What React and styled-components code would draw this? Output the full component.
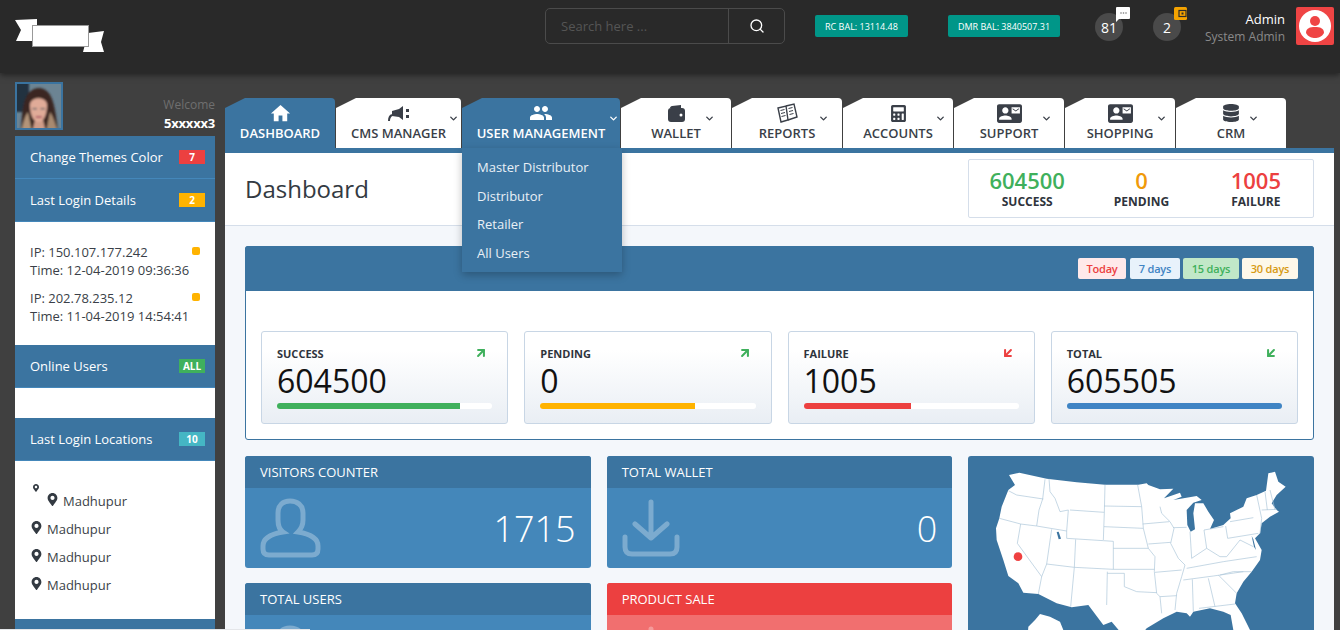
import React from 'react';
import styled, { createGlobalStyle } from 'styled-components';
import { Search, ArrowUpRight, ArrowDownLeft, ChevronDown } from 'lucide-react';
import { FaCalculator, FaDatabase, FaMapMarkerAlt } from 'react-icons/fa';
import { MdHome, MdPeople, MdContactMail } from 'react-icons/md';

const GlobalStyle = createGlobalStyle`
  html, body { margin: 0; padding: 0; height: 100%; overflow: hidden; }
  body { font-family: "Open Sans", "Liberation Sans", sans-serif; background: #404040; }
  * { box-sizing: border-box; }
`;

const Page = styled.div`
  height: 630px;
  overflow: hidden;
  display: flex;
  flex-direction: column;
`;

/* header */
const Header = styled.header`
  height: 73px;
  flex: none;
  background: #292929;
  box-shadow: 0 2px 6px rgba(0, 0, 0, 0.5);
  display: flex;
  align-items: flex-start;
  padding-left: 15px;
  position: relative;
  z-index: 3;
`;

const LogoWrap = styled.div`
  width: 90px;
  height: 34px;
  margin-top: 18px;
  svg { display: block; }
`;

const SearchBox = styled.div`
  width: 240px;
  height: 36px;
  margin: 8px 0 0 440px;
  border: 1px solid #4b4b4b;
  border-radius: 5px;
  display: flex;
  align-items: stretch;
`;

const SearchInput = styled.input`
  width: 182px;
  background: transparent;
  border: 0;
  outline: 0;
  padding: 0 15px;
  color: #fff;
  font: 400 13px "Open Sans", sans-serif;
  &::placeholder { color: #555; opacity: 1; }
`;

const SearchBtn = styled.div`
  flex: 1;
  border-left: 1px solid #4b4b4b;
  color: #fff;
  display: flex;
  align-items: center;
  justify-content: center;
`;

const Balance = styled.div`
  height: 22px;
  margin-top: 15px;
  margin-left: ${p => p.$ml}px;
  width: ${p => p.$w}px;
  background: #009688;
  border-radius: 2px;
  color: #fff;
  font-size: 9px;
  display: flex;
  align-items: center;
  justify-content: center;
  white-space: nowrap;
`;

const Notify = styled.div`
  position: relative;
  width: 28px;
  height: 28px;
  margin-top: 13px;
  margin-left: ${p => p.$ml}px;
  border-radius: 50%;
  background: #4a4a4a;
  color: #fff;
  font-size: 14px;
  display: flex;
  align-items: center;
  justify-content: center;
`;

const NotifyIcon = styled.div`
  position: absolute;
  top: -6px;
  left: 21px;
  line-height: 0;
`;

const UserText = styled.div`
  width: 104px;
  margin-top: 10px;
  text-align: right;
`;

const UserName = styled.div`
  color: #fff;
  font-size: 13px;
  line-height: 18px;
`;

const UserRole = styled.div`
  color: #8a8a8a;
  font-size: 12px;
  line-height: 18px;
`;

const UserTile = styled.div`
  width: 38px;
  height: 38px;
  margin: 7px 0 0 11px;
  background: #ef4444;
  border-radius: 2px;
  display: flex;
  align-items: center;
  justify-content: center;
`;

/* body */
const Body = styled.div`
  flex: 1;
  min-height: 0;
  display: flex;
  gap: 10px;
  padding: 0 6px 0 15px;
`;

const Sidebar = styled.aside`
  width: 200px;
  flex: none;
  padding-top: 9px;
`;

const Profile = styled.div`
  display: flex;
  justify-content: space-between;
  align-items: flex-end;
  height: 48px;
  margin-bottom: 6px;
`;

const Avatar = styled.div`
  width: 48px;
  height: 48px;
  border: 2px solid #3b74a0;
  overflow: hidden;
  svg { display: block; }
`;

const Welcome = styled.div`
  text-align: right;
  margin-bottom: -3px;
`;

const WelcomeLabel = styled.div`
  color: #6f6f6f;
  font-size: 12px;
  line-height: 18px;
`;

const WelcomeName = styled.div`
  color: #fff;
  font-size: 13px;
  font-weight: 700;
  letter-spacing: -0.2px;
  line-height: 19px;
`;

const SideItem = styled.div`
  height: 43px;
  padding: 0 10px 0 15px;
  background: #3b74a0;
  border-bottom: 1px solid #4487ba;
  color: #fff;
  font-size: 13px;
  display: flex;
  align-items: center;
  justify-content: space-between;
`;

const Badge = styled.span`
  width: 26px;
  height: 14px;
  background: ${p => p.$bg};
  color: #fff;
  font-size: 10px;
  font-weight: 700;
  line-height: 14px;
  text-align: center;
`;

const SideBlock = styled.div`
  background: #fff;
  height: ${p => p.$h}px;
  padding: ${p => p.$pt || 0}px 15px 0;
  color: #3a3f48;
  font-size: 13px;
  line-height: 18px;
`;

const LoginRow = styled.div`
  position: relative;
  margin-bottom: 10px;
  white-space: nowrap;
`;

const LoginDot = styled.i`
  position: absolute;
  top: 4px;
  right: 0;
  width: 8px;
  height: 8px;
  border-radius: 2px;
  background: #ffb300;
`;

const Place = styled.div`
  display: flex;
  align-items: center;
  gap: 4px;
  height: 28px;
  font-size: 13px;
  padding-left: ${p => p.$pl || 0}px;
  svg { margin-top: -4px; color: #333a42; }
`;

const LoosePin = styled.div`
  height: 3px;
  line-height: 0;
  padding-left: 2px;
  color: #333a42;
`;

/* main column */
const Main = styled.main`
  flex: 1;
  min-width: 0;
  padding-top: 25px;
  display: flex;
  flex-direction: column;
`;

const Tabs = styled.nav`
  height: 50px;
  flex: none;
  display: flex;
  gap: 1px;
  position: relative;
  z-index: 2;
`;

const Tab = styled.div`
  position: relative;
  width: ${p => p.$w}px;
  flex: none;
  background: ${p => (p.$active ? '#3b74a0' : '#fff')};
  color: ${p => (p.$active ? '#fff' : '#3a3f48')};
  border-top-right-radius: 4px;
  display: flex;
  flex-direction: column;
  align-items: center;
  font-size: 13px;
  font-weight: 600;
  white-space: nowrap;
`;

const TabCorner = styled.div`
  position: absolute;
  top: 0;
  left: 0;
  width: 20px;
  height: 10px;
  background: #404040;
  clip-path: polygon(0 0, 100% 0, 0 100%);
`;

const TabIcon = styled.div`
  position: relative;
  height: 20px;
  margin-top: 5px;
  display: flex;
  align-items: center;
  justify-content: center;
`;

const TabLabel = styled.div`
  position: relative;
  line-height: 18px;
  margin-top: 1px;
`;

const TabChevron = styled.div`
  position: absolute;
  top: 15px;
  right: ${p => p.$r}px;
  line-height: 0;
`;

const Dropdown = styled.div`
  position: absolute;
  top: 100%;
  left: 0;
  width: 160px;
  height: 124px;
  padding: 5px 15px 0;
  background: #3b74a0;
  box-shadow: 0 3px 8px rgba(0, 0, 0, 0.25);
  color: #e9f0f6;
  font-size: 13px;
  font-weight: 400;
`;

const DropItem = styled.div`
  height: 28.6px;
  line-height: 28.6px;
`;

const TabBar = styled.div`
  height: 5px;
  flex: none;
  background: #3b74a0;
`;

const Content = styled.div`
  flex: 1;
  min-height: 0;
  overflow: hidden;
  background: #f4f7fb;
`;

const TitleBar = styled.div`
  height: 73px;
  background: #fff;
  border-bottom: 1px solid #d5deea;
  padding: 6px 20px 0 20px;
  display: flex;
  justify-content: space-between;
  align-items: flex-start;
`;

const Title = styled.h1`
  margin: 16px 0 0;
  font-size: 24px;
  font-weight: 400;
  line-height: 28px;
  color: #333a42;
`;

const Summary = styled.div`
  width: 346px;
  height: 59px;
  border: 1px solid #d5deea;
  border-radius: 2px;
  display: grid;
  grid-template-columns: repeat(3, 1fr);
  padding: 7px 0 0 1px;
  text-align: center;
`;

const SummaryValue = styled.div`
  color: ${p => p.$c};
  font-size: 22px;
  font-weight: 600;
  line-height: 26px;
`;

const SummaryLabel = styled.div`
  color: #2f343c;
  font-size: 12px;
  font-weight: 700;
  line-height: 17px;
`;

const Inner = styled.div`
  padding: 20px 20px 0;
`;

const Panel = styled.section`
  border: 1px solid #3b74a0;
  border-radius: 3px;
  background: #fff;
  height: 194px;
`;

const PanelHead = styled.div`
  height: 45px;
  margin: -1px -1px 0;
  padding-right: 16px;
  background: #3b74a0;
  border-radius: 3px 3px 0 0;
  display: flex;
  align-items: center;
  justify-content: flex-end;
  gap: 4px;
`;

const RangeBtn = styled.span`
  height: 21px;
  width: ${p => p.$w}px;
  background: ${p => p.$bg};
  color: ${p => p.$c};
  border-radius: 2px;
  font-size: 11px;
  font-weight: 600;
  letter-spacing: -0.2px;
  line-height: 21px;
  text-align: center;
  margin-left: ${p => p.$ml || 0}px;
`;

const StatRow = styled.div`
  display: grid;
  grid-template-columns: repeat(4, 1fr);
  gap: 16px;
  padding: 40px 15px 0;
`;

const StatCard = styled.div`
  height: 93px;
  padding: 14px 15px 0;
  border: 1px solid #c8d6e5;
  border-radius: 3px;
  background: linear-gradient(#fff 20%, #e9eef4 100%);
`;

const StatTop = styled.div`
  display: flex;
  justify-content: space-between;
  align-items: center;
  height: 14px;
  color: #2f343c;
  font-size: 11px;
  font-weight: 700;
  padding-right: 4px;
`;

const StatValue = styled.div`
  color: #111;
  font-size: 32px;
  line-height: 38px;
  margin-top: 2px;
`;

const Track = styled.div`
  height: 6px;
  margin-top: 3px;
  background: #fff;
  border-radius: 3px;
  overflow: hidden;
`;

const Fill = styled.div`
  height: 100%;
  width: ${p => p.$pct}%;
  background: ${p => p.$c};
`;

const Widgets = styled.div`
  display: grid;
  grid-template-columns: repeat(3, 1fr);
  column-gap: 16px;
  row-gap: 15px;
  margin-top: 16px;
`;

const Widget = styled.div`
  height: 112px;
  border-radius: 3px;
  overflow: hidden;
  background: ${p => (p.$red ? '#f16f6f' : '#4487ba')};
`;

const WidgetHead = styled.div`
  height: 32px;
  padding: 0 15px;
  background: ${p => (p.$red ? '#ec4040' : '#3b74a0')};
  color: #fff;
  font-size: 13px;
  line-height: 32px;
`;

const WidgetBody = styled.div`
  height: 80px;
  padding: 0 15px;
  display: flex;
  align-items: center;
  justify-content: space-between;
  color: #fff;
  font-size: 36px;
  font-weight: 300;
`;

const MapCard = styled.div`
  grid-column: 3;
  grid-row: 1 / span 2;
  height: 239px;
  border-radius: 3px;
  overflow: hidden;
  background: #3b74a0;
  svg { display: block; }
`;

const StatusBubble = styled.div`
  position: fixed;
  left: 0;
  bottom: 0;
  width: 310px;
  height: 1px;
  background: #e4e6e9;
  z-index: 5;
`;

const Logo = () => (
  <svg width="90" height="34" viewBox="0 0 90 34">
    <polygon points="0,2 22,1 22,23 1,23 6,12" fill="#fff" />
    <polygon points="73,15 89,13 86,24 89,34 68,34" fill="#fff" />
    <rect x="17.5" y="7.5" width="56" height="21" fill="#fff" stroke="#999" strokeWidth="1" />
  </svg>
);

const AvatarArt = () => (
  <svg width="44" height="44" viewBox="0 0 44 44">
    <defs>
      <filter id="soft" x="-10%" y="-10%" width="120%" height="120%"><feGaussianBlur stdDeviation="0.8" /></filter>
    </defs>
    <rect width="44" height="44" fill="#6c8493" />
    <g filter="url(#soft)">
      <rect x="-4" y="-4" width="16" height="32" fill="#24333f" />
      <path d="M4 48 C5 22 7 5 22 4 C36 5 38 22 41 48 Z" fill="#3b2822" />
      <path d="M4 48 C7 36 8 32 11 28 L15 48 Z" fill="#b39479" />
      <path d="M41 48 C37 36 36 32 33 28 L29 48 Z" fill="#a88a70" />
      <path d="M15 48 L18 36 L26 36 L29 48 Z" fill="#cf9c88" />
      <path d="M13 21 C13 12 30 12 30 21 C30 32 26 38 21.5 38 C17 38 13 32 13 21 Z" fill="#e0ab98" />
      <rect x="15.5" y="24" width="4.5" height="1.3" fill="#4a5a60" />
      <rect x="23.5" y="24" width="4.5" height="1.3" fill="#4a5a60" />
      <rect x="18.5" y="32" width="6.5" height="2" rx="1" fill="#b05c68" />
    </g>
  </svg>
);

const ChatIcon = () => (
  <svg width="14" height="15" viewBox="0 0 14 15">
    <path d="M0 1 a1 1 0 0 1 1-1 h12 a1 1 0 0 1 1 1 v10 a1 1 0 0 1-1 1 H3 L0 15 Z" fill="#fff" />
    <circle cx="5" cy="6" r="0.8" fill="#777" />
    <circle cx="7.5" cy="6" r="0.8" fill="#777" />
    <circle cx="10" cy="6" r="0.8" fill="#777" />
  </svg>
);

const OrangeWallet = () => (
  <svg width="14" height="13" viewBox="0 0 14 13">
    <rect width="13" height="13" rx="1.5" fill="#f5a300" />
    <rect x="5" y="3.5" width="7" height="6" fill="none" stroke="#2b2b2b" strokeWidth="1.2" />
    <rect x="7.5" y="5.5" width="2" height="2" fill="#2b2b2b" />
  </svg>
);

const UserBadge = () => (
  <svg width="34" height="34" viewBox="0 0 34 34">
    <circle cx="17" cy="17" r="16" fill="#fff" />
    <circle cx="17" cy="12" r="5" fill="#ef4444" />
    <path d="M8 24 C8 19 12 18 17 18 C22 18 26 19 26 24 C24 28 20 29 17 29 C14 29 10 28 8 24 Z" fill="#ef4444" />
  </svg>
);

const CmsIcon = () => (
  <svg width="22" height="15" viewBox="0 0 22 15">
    <path d="M1 15 C1 12 2 10 4 9" fill="none" stroke="currentColor" strokeWidth="2" />
    <path d="M4 5 L11 3 L15 0 L15 14 L11 11 L4 10 Z" fill="currentColor" />
    <rect x="18" y="3" width="3" height="3" fill="currentColor" />
    <rect x="18" y="9" width="3" height="3" fill="currentColor" />
  </svg>
);

const WalletIcon = () => (
  <svg width="17" height="17" viewBox="0 0 17 17">
    <path d="M2 3 C2 2 3 1 4 1 L13 0 V3 Z" fill="currentColor" />
    <rect y="3" width="17" height="14" rx="3" fill="currentColor" />
    <circle cx="13" cy="10" r="1.5" fill="#fff" />
  </svg>
);

const BookIcon = () => (
  <svg width="22" height="20" viewBox="0 0 22 20" fill="none" stroke="currentColor" strokeWidth="1.4">
    <path d="M2 5 L10 3 L12 17 L5 19 Z" />
    <path d="M10 3 L18 1 L21 14 L12 17" />
    <path d="M4.5 7.5 L8.5 6.5 M5 10.5 L9 9.5 M5.5 13.5 L9.5 12.5 M12.5 5.5 L16.5 4.5 M13 8.5 L17 7.5 M13.5 11.5 L17.5 10.5" strokeWidth="1" />
  </svg>
);

const PersonOutline = () => (
  <svg width="62" height="60" viewBox="0 0 62 60" fill="none" stroke="rgba(255,255,255,0.3)" strokeWidth="5">
    <path d="M18 22 V15 C18 7 23 3 30 3 C37 3 43 7 43 15 V22 C43 28 40 32 38 34 C50 36 58 40 58 48 V51 C58 55 56 57 52 57 H9 C5 57 3 55 3 51 V48 C3 40 11 36 23 34 C20 32 18 28 18 22 Z" />
  </svg>
);

const DownloadOutline = () => (
  <svg width="58" height="58" viewBox="0 0 58 58" fill="none" stroke="rgba(255,255,255,0.3)" strokeWidth="5" strokeLinecap="round" strokeLinejoin="round">
    <path d="M29 3 V37 M13 25 L29 39 L45 25" />
    <path d="M3 38 V48 C3 53 6 55 10 55 H48 C52 55 55 53 55 48 V38" />
  </svg>
);

const OUTLINE =
  'M147 75 L178 68 L260 86 L350 97 L435 104 L535 104 L560 100 L565 105 L600 118 L640 116 L612 145 L660 128 L665 140 L640 150 L710 138 L725 150 L700 158 L680 180 L682 225 L692 245 L705 238 L700 190 L705 160 L730 160 L745 185 L762 210 L750 237 L790 225 L812 205 L810 190 L850 170 L860 145 L890 135 L918 122 L925 70 L945 65 L955 95 L977 110 L950 135 L935 160 L950 180 L957 185 L930 200 L905 220 L900 250 L885 265 L905 300 L900 330 L875 365 L850 395 L830 430 L825 460 L845 490 L870 540 L885 590 L880 625 L860 610 L835 570 L820 540 L812 495 L790 485 L750 475 L700 485 L690 500 L680 490 L650 485 L610 505 L560 535 L530 570 L530 610 L500 590 L480 545 L455 515 L430 525 L385 465 L335 472 L290 460 L235 432 L190 428 L175 400 L145 378 L130 330 L110 270 L108 235 L118 205 L125 170 L145 120 L165 105 Z';

const ALASKA = 'M205 530 L225 510 L240 492 L270 500 L300 515 L310 540 L330 600 L280 570 L230 580 L200 600 Z';

const BORDERS = [
  'M145 122 L170 135 L250 147',
  'M255 88 L248 147 L237 180 L230 228',
  'M267 86 L270 125 L285 145 L300 185 L325 180 L320 243 L320 265 L430 272 L460 274 L460 358',
  'M118 205 L182 222 L230 228 L320 243',
  'M330 180 L433 187',
  'M435 104 L433 187 L430 270',
  'M533 105 L545 170 L550 235 L565 295 L585 320 L583 365 L590 430 L600 440 L605 490',
  'M433 168 L545 170',
  'M432 230 L550 235',
  'M347 268 L343 352 L332 470',
  'M275 238 L260 342 L245 380 L235 432',
  'M182 222 L172 280 L245 380',
  'M260 342 L343 352 L460 358 L583 358',
  'M442 365 L440 465',
  'M442 370 L493 370 L493 410 L530 425 L590 428',
  'M460 295 L565 295',
  'M548 222 L628 215',
  'M565 282 L632 277',
  'M600 170 L605 190 L630 215 L642 235 L632 280 L655 325 L675 345 L665 380 L650 430 L645 480',
  'M640 233 L680 232',
  'M585 367 L665 360',
  'M600 440 L650 437',
  'M690 245 L695 325',
  'M732 240 L740 295',
  'M732 240 L790 230',
  'M695 325 L740 295 L780 320',
  'M680 355 L790 335 L890 320',
  'M670 390 L760 378 L850 365',
  'M697 388 L700 485',
  'M745 385 L765 470',
  'M717 475 L825 462',
  'M775 375 L830 430',
  'M780 375 L820 365 L875 365',
  'M797 228 L803 265 L895 250',
  'M810 215 L880 203',
  'M780 320 L800 320 L840 270 L880 290',
  'M890 135 L905 205 L900 250',
  'M915 125 L922 180',
  'M930 120 L945 180',
  'M905 180 L950 178',
];

const UsMap = () => (
  <svg width="346" height="239" viewBox="24 18 1038 717">
    <path d={OUTLINE} fill="#fff" />
    <path d={ALASKA} fill="#fff" />
    <path d={BORDERS.join(' ')} fill="none" stroke="#a9c4d8" strokeWidth="2" />
    <path d="M290 246 L296 245 L303 266 L296 268 Z" fill="#3b74a0" />
    <path d="M875 258 L882 290 L888 300 L880 268 Z" fill="#3b74a0" />
    <circle cx="174" cy="320" r="13" fill="#ef4040" />
  </svg>
);

const tabs = [
  { label: 'DASHBOARD', w: 110, active: true, icon: <MdHome size={23} /> },
  { label: 'CMS MANAGER', w: 125, chev: 2, icon: <CmsIcon /> },
  { label: 'USER MANAGEMENT', w: 158, chev: 1, active: true, open: true, icon: <MdPeople size={24} /> },
  { label: 'WALLET', w: 110, chev: 16, icon: <WalletIcon /> },
  { label: 'REPORTS', w: 110, chev: 13, icon: <BookIcon /> },
  { label: 'ACCOUNTS', w: 110, chev: 7, icon: <FaCalculator size={17} /> },
  { label: 'SUPPORT', w: 110, chev: 12, icon: <MdContactMail size={25} /> },
  { label: 'SHOPPING', w: 110, chev: 8, icon: <MdContactMail size={25} /> },
  { label: 'CRM', w: 110, chev: 27, icon: <FaDatabase size={18} /> },
];

const menuItems = ['Master Distributor', 'Distributor', 'Retailer', 'All Users'];

const stats = [
  { label: 'SUCCESS', value: '604500', pct: 85, color: '#3fb05c', up: true, arrow: '#3fb05c' },
  { label: 'PENDING', value: '0', pct: 72, color: '#ffb300', up: true, arrow: '#3fb05c' },
  { label: 'FAILURE', value: '1005', pct: 50, color: '#ec4040', up: false, arrow: '#ec4040' },
  { label: 'TOTAL', value: '605505', pct: 100, color: '#3f84c4', up: false, arrow: '#3fb05c' },
];

const App = () => (
  <Page>
    <GlobalStyle />
    <Header>
      <LogoWrap><Logo /></LogoWrap>
      <SearchBox>
        <SearchInput placeholder="Search here ..." />
        <SearchBtn><Search size={16} strokeWidth={2} /></SearchBtn>
      </SearchBox>
      <Balance $ml={30} $w={93}>RC BAL: 13114.48</Balance>
      <Balance $ml={40} $w={112}>DMR BAL: 3840507.31</Balance>
      <Notify $ml={35}>81<NotifyIcon><ChatIcon /></NotifyIcon></Notify>
      <Notify $ml={30}>2<NotifyIcon><OrangeWallet /></NotifyIcon></Notify>
      <UserText>
        <UserName>Admin</UserName>
        <UserRole>System Admin</UserRole>
      </UserText>
      <UserTile><UserBadge /></UserTile>
    </Header>
    <Body>
      <Sidebar>
        <Profile>
          <Avatar><AvatarArt /></Avatar>
          <Welcome>
            <WelcomeLabel>Welcome</WelcomeLabel>
            <WelcomeName>5xxxxx3</WelcomeName>
          </Welcome>
        </Profile>
        <SideItem>Change Themes Color<Badge $bg="#ec4040">7</Badge></SideItem>
        <SideItem>Last Login Details<Badge $bg="#ffb300">2</Badge></SideItem>
        <SideBlock $h={123} $pt={21}>
          <LoginRow>
            <LoginDot />
            <div>IP: 150.107.177.242</div>
            <div>Time: 12-04-2019 09:36:36</div>
          </LoginRow>
          <LoginRow>
            <LoginDot />
            <div>IP: 202.78.235.12</div>
            <div>Time: 11-04-2019 14:54:41</div>
          </LoginRow>
        </SideBlock>
        <SideItem>Online Users<Badge $bg="#3fb05c">ALL</Badge></SideItem>
        <SideBlock $h={30} />
        <SideItem>Last Login Locations<Badge $bg="#45b6c4">10</Badge></SideItem>
        <SideBlock $h={158} $pt={23}>
          <LoosePin><FaMapMarkerAlt size={8} /></LoosePin>
          <Place $pl={16}><FaMapMarkerAlt size={13} />Madhupur</Place>
          <Place><FaMapMarkerAlt size={13} />Madhupur</Place>
          <Place><FaMapMarkerAlt size={13} />Madhupur</Place>
          <Place><FaMapMarkerAlt size={13} />Madhupur</Place>
        </SideBlock>
        <SideItem />
      </Sidebar>
      <Main>
        <Tabs>
          {tabs.map(t => (
            <Tab key={t.label} $w={t.w} $active={t.active}>
              <TabCorner />
              <TabIcon>{t.icon}</TabIcon>
              <TabLabel>{t.label}</TabLabel>
              {t.chev !== undefined && (
                <TabChevron $r={t.chev}><ChevronDown size={11} strokeWidth={3} /></TabChevron>
              )}
              {t.open && (
                <Dropdown>
                  {menuItems.map(m => <DropItem key={m}>{m}</DropItem>)}
                </Dropdown>
              )}
            </Tab>
          ))}
        </Tabs>
        <TabBar />
        <Content>
          <TitleBar>
            <Title>Dashboard</Title>
            <Summary>
              <div><SummaryValue $c="#3fb05c">604500</SummaryValue><SummaryLabel>SUCCESS</SummaryLabel></div>
              <div><SummaryValue $c="#f09a0a">0</SummaryValue><SummaryLabel>PENDING</SummaryLabel></div>
              <div><SummaryValue $c="#ec4040">1005</SummaryValue><SummaryLabel>FAILURE</SummaryLabel></div>
            </Summary>
          </TitleBar>
          <Inner>
            <Panel>
              <PanelHead>
                <RangeBtn $w={48} $bg="#ffe9ea" $c="#ec4040">Today</RangeBtn>
                <RangeBtn $w={50} $bg="#e8f2fb" $c="#3f84c4">7 days</RangeBtn>
                <RangeBtn $w={56} $bg="#c1e8c8" $c="#3fb05c" $ml={-1}>15 days</RangeBtn>
                <RangeBtn $w={56} $bg="#fdf8ea" $c="#d79a12" $ml={-1}>30 days</RangeBtn>
              </PanelHead>
              <StatRow>
                {stats.map(s => (
                  <StatCard key={s.label}>
                    <StatTop>
                      {s.label}
                      {s.up
                        ? <ArrowUpRight size={14} strokeWidth={3.5} color={s.arrow} />
                        : <ArrowDownLeft size={14} strokeWidth={3.5} color={s.arrow} />}
                    </StatTop>
                    <StatValue>{s.value}</StatValue>
                    <Track><Fill $pct={s.pct} $c={s.color} /></Track>
                  </StatCard>
                ))}
              </StatRow>
            </Panel>
            <Widgets>
              <Widget>
                <WidgetHead>VISITORS COUNTER</WidgetHead>
                <WidgetBody><PersonOutline />1715</WidgetBody>
              </Widget>
              <Widget>
                <WidgetHead>TOTAL WALLET</WidgetHead>
                <WidgetBody><DownloadOutline />0</WidgetBody>
              </Widget>
              <MapCard><UsMap /></MapCard>
              <Widget>
                <WidgetHead>TOTAL USERS</WidgetHead>
                <WidgetBody><PersonOutline /></WidgetBody>
              </Widget>
              <Widget $red>
                <WidgetHead $red>PRODUCT SALE</WidgetHead>
                <WidgetBody><DownloadOutline /></WidgetBody>
              </Widget>
            </Widgets>
          </Inner>
        </Content>
      </Main>
    </Body>
    <StatusBubble />
  </Page>
);

export default App;
